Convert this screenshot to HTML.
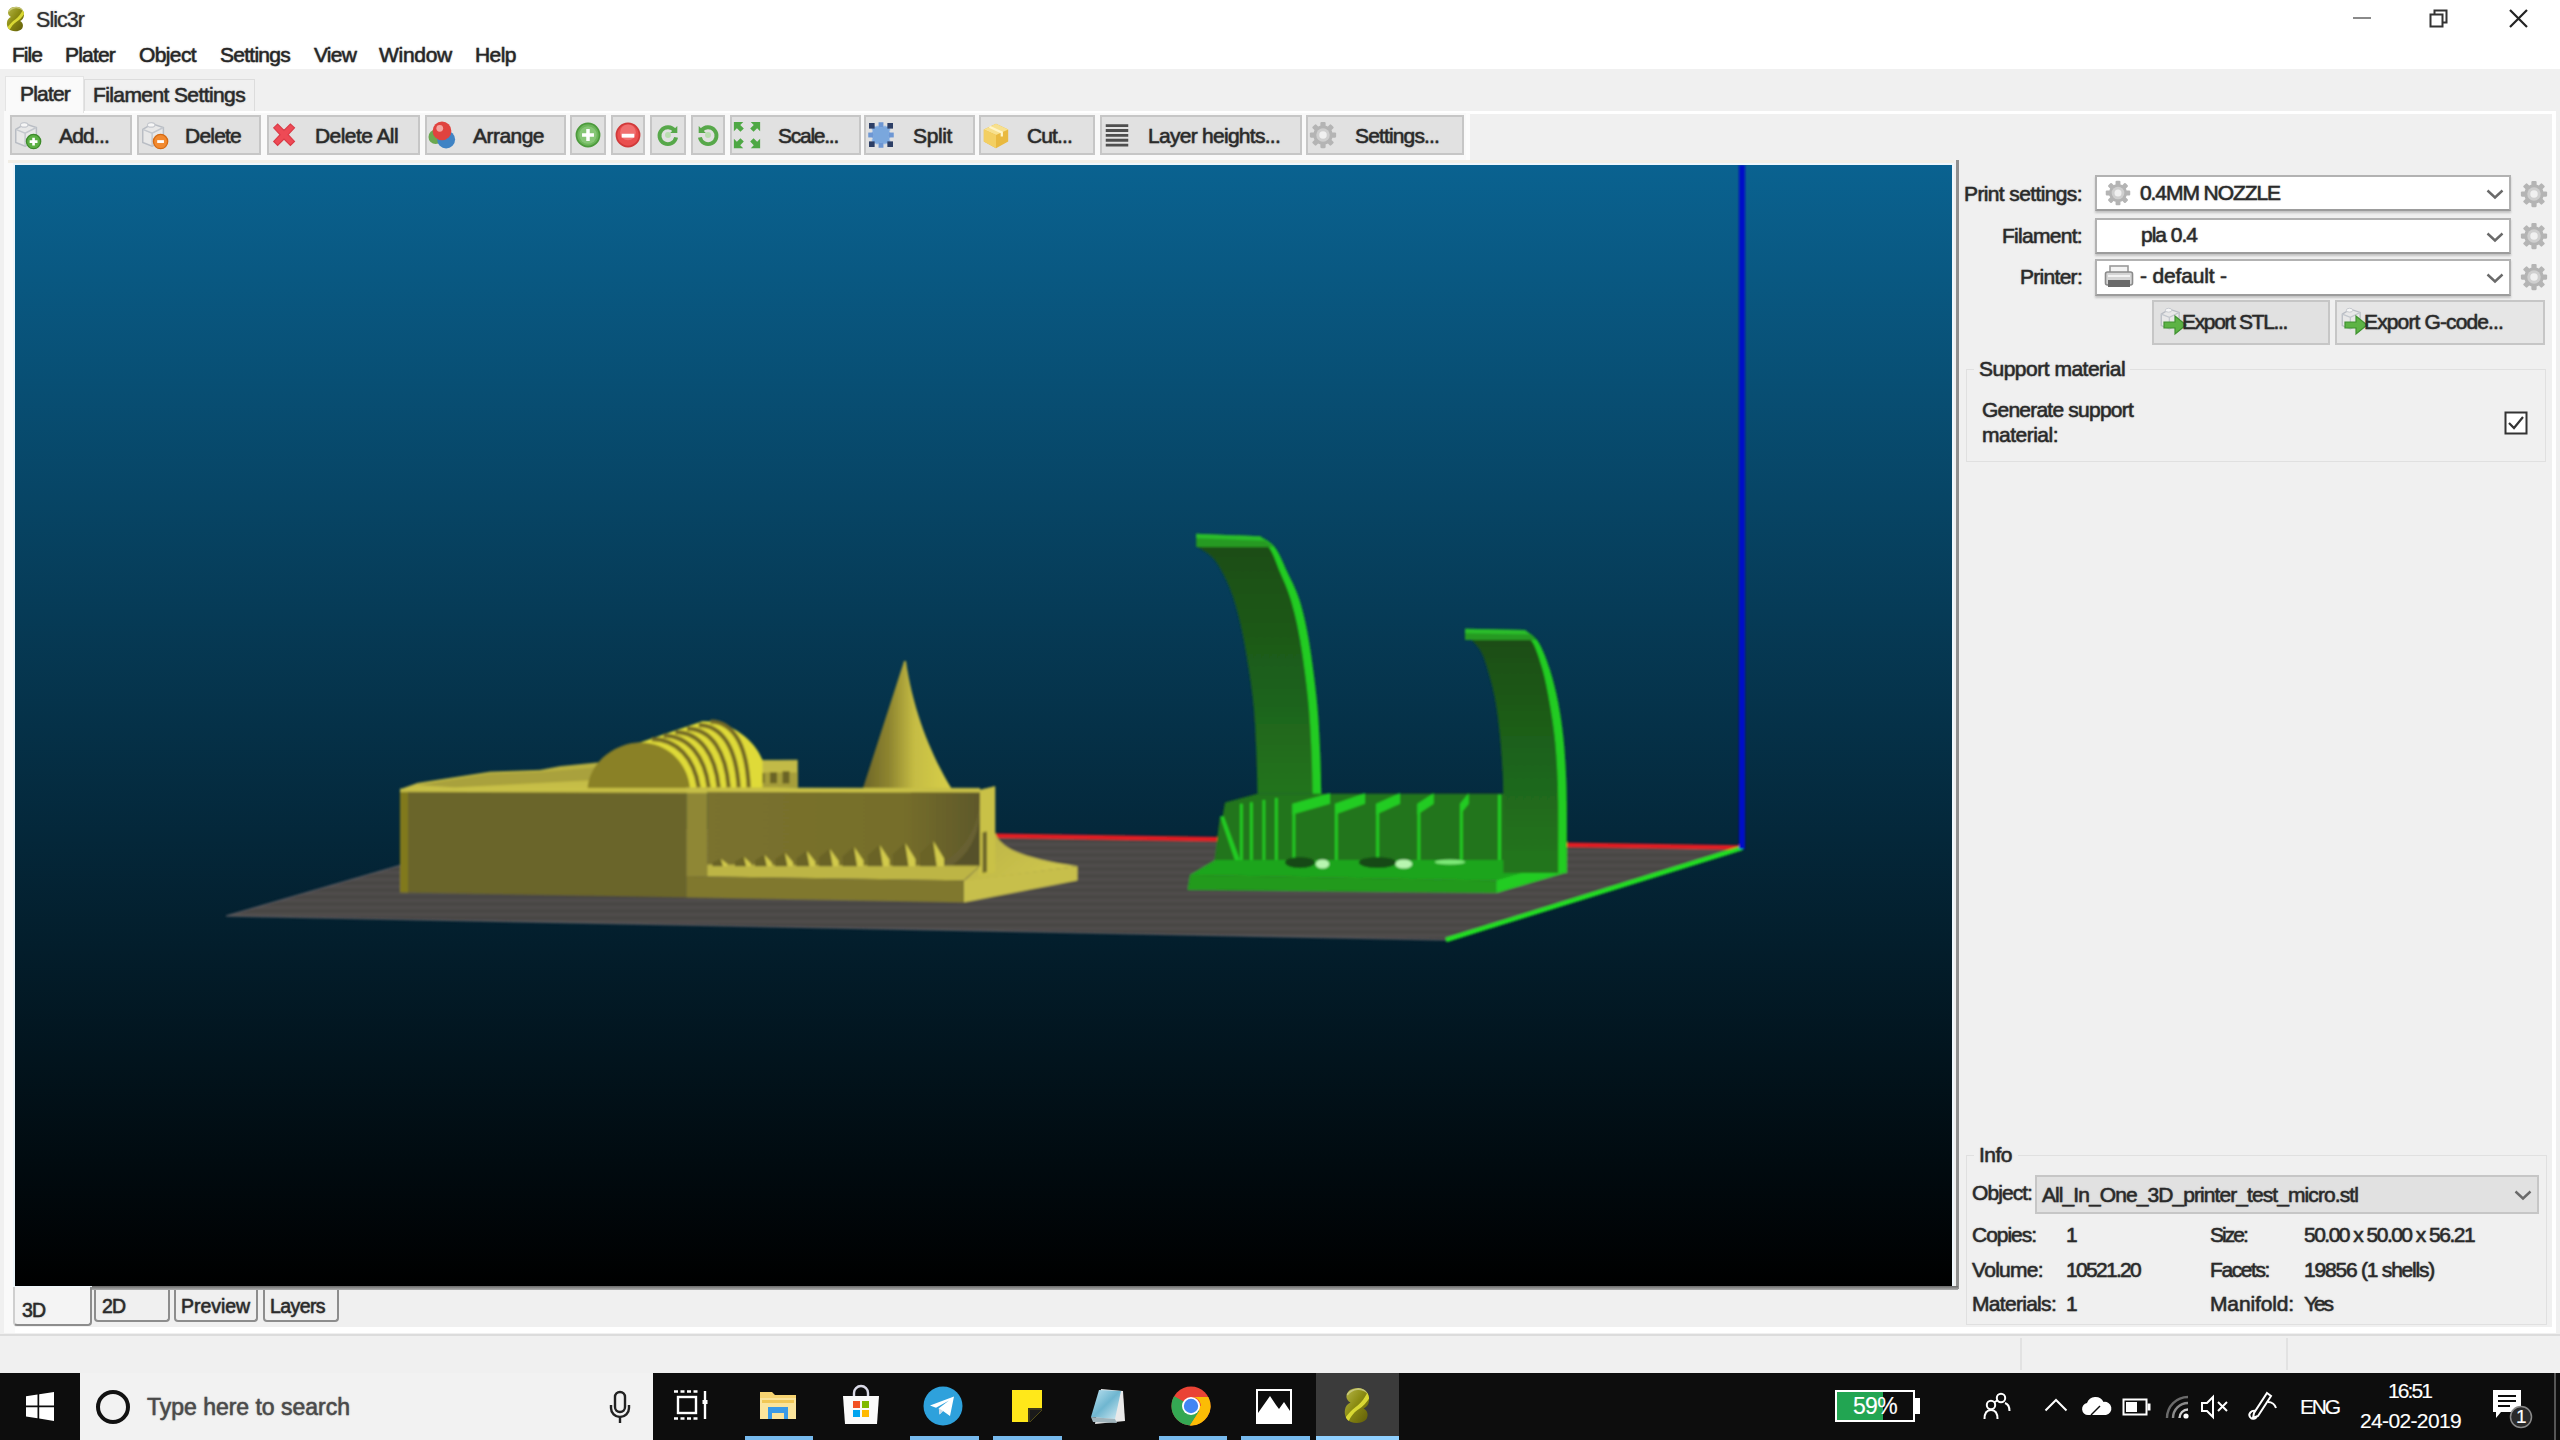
<!DOCTYPE html>
<html><head><meta charset="utf-8"><title>Slic3r</title>
<style>
html,body{margin:0;padding:0}
body{width:2560px;height:1440px;position:relative;overflow:hidden;background:#f0f0f0;font-family:"Liberation Sans",sans-serif}
.t{position:absolute;white-space:nowrap;line-height:30px;height:30px;-webkit-text-stroke:.45px currentColor;text-shadow:0 0 1.6px rgba(60,60,60,.55)}
.a{position:absolute}
.btn{position:absolute;background:#e1e1e1;border:2px solid #c6c6c6;box-sizing:border-box}
.combo{position:absolute;background:#fff;border:2px solid #b2b2b2;border-bottom:2.5px solid #9c9c9c;box-shadow:0 2px 2px #c4c4c4;box-sizing:border-box}
svg{position:absolute;overflow:visible}
</style></head><body>
<div class="a" style="left:0;top:0;width:2560px;height:69px;background:#fff"></div>
<svg style="left:6px;top:6px" width="19" height="26" viewBox="0 0 26 37">
<defs><linearGradient id="lga" x1="0" y1="0" x2="1" y2="1"><stop offset="0" stop-color="#b8b84a"/><stop offset=".45" stop-color="#8c8c14"/><stop offset="1" stop-color="#5e5a08"/></linearGradient>
<clipPath id="lca"><path d="M14 1C22 1 26 8 25 14C24.500 18 22.500 20 19.500 21.500C23 23 25 27.500 22.500 32C19.500 36 12 37 7 35C2 33 0 28 1 22.500C1.500 19 3.500 17 6.500 15.500C2.500 13.500 1 9 4 5C6 2 10 1 14 1Z"/></clipPath></defs>
<path d="M14 1C22 1 26 8 25 14C24.500 18 22.500 20 19.500 21.500C23 23 25 27.500 22.500 32C19.500 36 12 37 7 35C2 33 0 28 1 22.500C1.500 19 3.500 17 6.500 15.500C2.500 13.500 1 9 4 5C6 2 10 1 14 1Z" fill="url(#lga)"/>
<g clip-path="url(#lca)"><path d="M-2 36C4 26 9 22 13 19C17 16 22 10 26 0L30 4C24 14 20 19 15 22C10 25 6 30 2 40Z" fill="#d9d834"/><path d="M3 8C8 1 18 0 24 6" fill="none" stroke="#cfd08a" stroke-width="2" opacity=".8"/></g></svg>
<span class="t" style="left:36.0px;top:5.0px;font-size:21.5px;letter-spacing:-0.96px;color:#303030;-webkit-text-stroke:.15px currentColor">Slic3r</span>
<div class="a" style="left:2353px;top:17px;width:18px;height:2px;background:#8a8a8a"></div>
<svg style="left:2429px;top:9px" width="20" height="20" viewBox="0 0 20 20"><path d="M1.5 5.5h12v12h-12z M5.5 5.5v-4h12v12h-4" fill="none" stroke="#333" stroke-width="2"/></svg>
<svg style="left:2509px;top:9px" width="19" height="19" viewBox="0 0 19 19"><path d="M1 1L18 18M18 1L1 18" stroke="#222" stroke-width="2.2"/></svg>
<span class="t" style="left:12.0px;top:40.0px;font-size:21px;letter-spacing:-0.96px;color:#262626;">File</span>
<span class="t" style="left:65.0px;top:40.0px;font-size:21px;letter-spacing:-0.81px;color:#262626;">Plater</span>
<span class="t" style="left:139.0px;top:40.0px;font-size:21px;letter-spacing:-0.62px;color:#262626;">Object</span>
<span class="t" style="left:220.0px;top:40.0px;font-size:21px;letter-spacing:-0.74px;color:#262626;">Settings</span>
<span class="t" style="left:314.0px;top:40.0px;font-size:21px;letter-spacing:-0.78px;color:#262626;">View</span>
<span class="t" style="left:379.0px;top:40.0px;font-size:21px;letter-spacing:-0.28px;color:#262626;">Window</span>
<span class="t" style="left:475.0px;top:40.0px;font-size:21px;letter-spacing:-0.55px;color:#262626;">Help</span>
<div class="a" style="left:4px;top:111px;width:2552px;height:1223px;background:#fff"></div>
<div class="a" style="left:8px;top:113.5px;width:2544px;height:1213.5px;background:#f0f0f0"></div>
<div class="a" style="left:5px;top:76px;width:79px;height:37px;background:#fafafa;border:1px solid #e4e4e4;border-bottom:none;box-sizing:border-box"></div>
<div class="a" style="left:84px;top:79px;width:171px;height:32px;background:#f0f0f0;border:1px solid #dcdcdc;border-bottom:none;box-sizing:border-box"></div>
<span class="t" style="left:20.0px;top:79.0px;font-size:21px;letter-spacing:-0.81px;color:#2a2a2a;">Plater</span>
<span class="t" style="left:93.0px;top:80.0px;font-size:21px;letter-spacing:-0.60px;color:#2a2a2a;">Filament Settings</span>
<div class="a" style="left:8px;top:113px;width:1459px;height:47px;background:#f9f9f9"></div>
<div class="a" style="left:1466px;top:113px;width:4px;height:47px;background:#fcfcfc"></div>
<div class="btn" style="left:10px;top:115px;width:122px;height:40px"></div>
<svg style="left:12px;top:120px" width="30" height="30" viewBox="0 0 16 16"><path d="M2 5l5-3 6 2v7l-6 3-5-2z" fill="#e8e8e8" stroke="#b9bdc4" stroke-width=".8"/><path d="M2 5l5 2 6-3M7 7v7" fill="none" stroke="#c3c7cd" stroke-width=".8"/><ellipse cx="6.5" cy="2.6" rx="2" ry="1.2" fill="#f6f6f6" stroke="#c5c8ce" stroke-width=".6"/><circle cx="11.5" cy="11.5" r="3.8" fill="#5cb044" stroke="#3c8a2a" stroke-width=".7"/><path d="M11.5 9.4v4.2M9.4 11.5h4.2" stroke="#fff" stroke-width="1.4"/></svg>
<span class="t" style="left:59.0px;top:121.0px;font-size:21px;letter-spacing:-0.81px;color:#2a2a2a;">Add...</span>
<div class="btn" style="left:137px;top:115px;width:124px;height:40px"></div>
<svg style="left:139px;top:120px" width="30" height="30" viewBox="0 0 16 16"><path d="M2 5l5-3 6 2v7l-6 3-5-2z" fill="#e8e8e8" stroke="#b9bdc4" stroke-width=".8"/><path d="M2 5l5 2 6-3M7 7v7" fill="none" stroke="#c3c7cd" stroke-width=".8"/><ellipse cx="6.5" cy="2.6" rx="2" ry="1.2" fill="#f6f6f6" stroke="#c5c8ce" stroke-width=".6"/><circle cx="11.5" cy="11.5" r="3.8" fill="#f28a30" stroke="#d56a12" stroke-width=".7"/><path d="M9.7 11.5h3.6" stroke="#fff" stroke-width="1.5"/></svg>
<span class="t" style="left:185.0px;top:121.0px;font-size:21px;letter-spacing:-0.78px;color:#2a2a2a;">Delete</span>
<div class="btn" style="left:267px;top:115px;width:153px;height:40px"></div>
<svg style="left:269px;top:120px" width="30" height="30" viewBox="0 0 16 16"><path d="M2.5 4.2L4.6 2.2 8 5.6 11.4 2.2 13.6 4.2 10.2 7.8 13.6 11.4 11.4 13.6 8 10.2 4.6 13.6 2.5 11.4 5.9 7.8Z" fill="#ee4a55" stroke="#d93a46" stroke-width=".6"/></svg>
<span class="t" style="left:315.0px;top:121.0px;font-size:21px;letter-spacing:-0.57px;color:#2a2a2a;">Delete All</span>
<div class="btn" style="left:425px;top:115px;width:141px;height:40px"></div>
<svg style="left:427px;top:120px" width="30" height="30" viewBox="0 0 16 16"><circle cx="4.600" cy="9" r="3.800" fill="#6aa84f"/><circle cx="10.200" cy="10.400" r="4.800" fill="#3f83c4"/><circle cx="8" cy="5.800" r="5" fill="#e0433f"/><circle cx="6.800" cy="4.400" r="1.800" fill="#f3a5a1"/></svg>
<span class="t" style="left:473.0px;top:121.0px;font-size:21px;letter-spacing:-0.53px;color:#2a2a2a;">Arrange</span>
<div class="btn" style="left:570px;top:115px;width:36px;height:40px"></div>
<svg style="left:574.0px;top:121.0px" width="28" height="28" viewBox="0 0 16 16"><circle cx="8" cy="8" r="6.6" fill="#6cb65a" stroke="#4c9a3c" stroke-width="1"/><circle cx="8" cy="8" r="5" fill="#86c676"/><path d="M8 4.6v6.8M4.6 8h6.8" stroke="#fff" stroke-width="2"/></svg>
<div class="btn" style="left:611px;top:115px;width:34px;height:40px"></div>
<svg style="left:614.0px;top:121.0px" width="28" height="28" viewBox="0 0 16 16"><circle cx="8" cy="8" r="6.6" fill="#ea4f4f" stroke="#d03a3a" stroke-width="1"/><circle cx="8" cy="6.5" r="4.5" fill="#f07070"/><path d="M4.4 8.4h7.2" stroke="#fff" stroke-width="2.2"/></svg>
<div class="btn" style="left:650px;top:115px;width:36px;height:40px"></div>
<svg style="left:656.0px;top:123.0px" width="24" height="24" viewBox="0 0 16 16"><path d="M12.5 5.2A5.6 5.6 0 1 0 13.4 9.6" fill="none" stroke="#57a84a" stroke-width="2.6"/><path d="M9.4 6.6h4.8V2z" fill="#57a84a"/><circle cx="8" cy="8" r="2" fill="#b9deb0"/></svg>
<div class="btn" style="left:691px;top:115px;width:34px;height:40px"></div>
<svg style="left:696.0px;top:123.0px" width="24" height="24" viewBox="0 0 16 16"><path d="M3.5 5.2A5.6 5.6 0 1 1 2.6 9.6" fill="none" stroke="#57a84a" stroke-width="2.6"/><path d="M6.6 6.6H1.8V2z" fill="#57a84a"/><circle cx="8" cy="8" r="2" fill="#b9deb0"/></svg>
<div class="btn" style="left:730px;top:115px;width:131px;height:40px"></div>
<svg style="left:732px;top:120px" width="30" height="30" viewBox="0 0 16 16"><g fill="#4ea844"><path d="M1 1h5L4.4 2.6 6.3 4.5 4.5 6.3 2.6 4.4 1 6z"/><path d="M15 1v5l-1.6-1.6-1.9 1.9-1.8-1.8 1.9-1.9L10 1z"/><path d="M1 15v-5l1.6 1.6 1.9-1.9 1.8 1.8-1.9 1.9L6 15z"/><path d="M15 15h-5l1.6-1.6-1.9-1.9 1.8-1.8 1.9 1.9L15 10z"/></g></svg>
<span class="t" style="left:778.0px;top:121.0px;font-size:21px;letter-spacing:-1.25px;color:#2a2a2a;">Scale...</span>
<div class="btn" style="left:864px;top:115px;width:111px;height:40px"></div>
<svg style="left:866px;top:120px" width="30" height="30" viewBox="0 0 16 16"><rect x="3.5" y="3.5" width="9" height="9" fill="#7aa7dd" stroke="#8fb6e6" stroke-width=".8" stroke-dasharray="1.2 .8"/><g fill="#2d3f66"><rect x="1.6" y="1.6" width="3" height="3"/><rect x="11.4" y="1.6" width="3" height="3"/><rect x="1.6" y="11.4" width="3" height="3"/><rect x="11.4" y="11.4" width="3" height="3"/></g><g fill="#6d97d4"><rect x="6.7" y="1.2" width="2.6" height="2.6"/><rect x="6.7" y="12.2" width="2.6" height="2.6"/><rect x="1.2" y="6.7" width="2.6" height="2.6"/><rect x="12.2" y="6.7" width="2.6" height="2.6"/></g></svg>
<span class="t" style="left:913.0px;top:121.0px;font-size:21px;letter-spacing:-0.37px;color:#2a2a2a;">Split</span>
<div class="btn" style="left:979px;top:115px;width:116px;height:40px"></div>
<svg style="left:981px;top:120px" width="30" height="30" viewBox="0 0 16 16"><path d="M1.5 5L8 2l6.5 3v6.5L8 15l-6.5-3.5z" fill="#e9b93f"/><path d="M1.5 5L8 8l6.5-3L8 2z" fill="#f7e08e"/><path d="M1.5 5L8 8v7l-6.5-3.5z" fill="#f3cf62"/><path d="M4.5 3.6l6.6 3v2.2" stroke="#fff4c6" stroke-width="1.2" fill="none"/></svg>
<span class="t" style="left:1027.0px;top:121.0px;font-size:21px;letter-spacing:-0.86px;color:#2a2a2a;">Cut...</span>
<div class="btn" style="left:1100px;top:115px;width:202px;height:40px"></div>
<svg style="left:1102px;top:120px" width="30" height="30" viewBox="0 0 16 16"><g stroke="#4e4e4e" stroke-width="1.5"><path d="M2 3h12M2 5.6h12M2 8.2h12M2 10.8h12M2 13.4h12"/></g></svg>
<span class="t" style="left:1148.0px;top:121.0px;font-size:21px;letter-spacing:-0.72px;color:#2a2a2a;">Layer heights...</span>
<div class="btn" style="left:1306px;top:115px;width:158px;height:40px"></div>
<svg style="left:1308px;top:120px" width="30" height="30" viewBox="0 0 16 16"><g fill="#b4b4b4"><circle cx="8" cy="8" r="5.2"/><g><rect x="6.6" y="1" width="2.8" height="14" rx=".6"/><rect x="6.6" y="1" width="2.8" height="14" rx=".6" transform="rotate(45 8 8)"/><rect x="6.6" y="1" width="2.8" height="14" rx=".6" transform="rotate(90 8 8)"/><rect x="6.6" y="1" width="2.8" height="14" rx=".6" transform="rotate(135 8 8)"/></g></g><circle cx="8" cy="8" r="3.6" fill="#cfcfcf"/><circle cx="8" cy="8" r="2" fill="#f0f0f0"/></svg>
<span class="t" style="left:1355.0px;top:121.0px;font-size:21px;letter-spacing:-0.85px;color:#2a2a2a;">Settings...</span>
<div class="a" style="left:4px;top:111px;width:4px;height:1216px;background:#fff"></div>
<div class="a" style="left:4px;top:111px;width:5px;height:52px;background:#fafafa"></div>
<div class="a" style="left:4px;top:160px;width:11px;height:1173px;background:#fafafa"></div>
<div class="a" style="left:8px;top:160px;width:1946px;height:3px;background:#f1eee6"></div>
<div class="a" style="left:13px;top:163px;width:1941px;height:1125px;background:#eef6fb"></div>
<div class="a" style="left:1955.5px;top:160px;width:3px;height:1129px;background:#8f8f8f"></div>
<div class="a" id="cv" style="left:15px;top:165px;width:1937px;height:1121px;background:linear-gradient(#0a6290,#000)"></div>
<svg style="left:0;top:0" width="2560" height="1440" viewBox="0 0 2560 1440">
<defs>
<pattern id="bedp" width="8" height="7" patternUnits="userSpaceOnUse"><rect width="8" height="7" fill="#4c4a48"/><rect y="0" width="8" height="2" fill="#464442"/><rect y="4" width="8" height="1" fill="#545150"/></pattern>
<linearGradient id="cone" x1="0" y1="0" x2="1" y2="0"><stop offset="0" stop-color="#6c6428"/><stop offset=".3" stop-color="#8f8630"/><stop offset=".58" stop-color="#c6bd44"/><stop offset="1" stop-color="#d8d048"/></linearGradient>
<linearGradient id="ytop" x1="0" y1="0" x2="0" y2="1"><stop offset="0" stop-color="#b5ad40"/><stop offset="1" stop-color="#cac248"/></linearGradient>
<linearGradient id="yrec" x1="0" y1="0" x2="1" y2="0"><stop offset="0" stop-color="#7a722e"/><stop offset=".72" stop-color="#766e2b"/><stop offset="1" stop-color="#5e582a"/></linearGradient>
<linearGradient id="flare" x1="0" y1="0" x2="1" y2="1"><stop offset="0" stop-color="#b2aa42"/><stop offset="1" stop-color="#d2ca50"/></linearGradient>
<filter id="softb" x="0" y="0" width="2560" height="1440" filterUnits="userSpaceOnUse"><feGaussianBlur stdDeviation=".8"/></filter>
<clipPath id="cvclip"><rect x="15" y="165" width="1937" height="1121"/></clipPath>
</defs>
<g clip-path="url(#cvclip)"><g filter="url(#softb)">
<polygon points="226,916 532,827 1742,848 1446,940" fill="url(#bedp)"/>
<polygon points="226,916 532,827 1742,848 1446,940" fill="none" stroke="#6a686c" stroke-width="1.5" opacity=".6"/>
<line x1="1742" y1="847.5" x2="985" y2="835.5" stroke="#e41c22" stroke-width="4.5"/>
<line x1="1742" y1="848" x2="1446" y2="940" stroke="#20e020" stroke-width="4.5"/>
<line x1="1742" y1="165" x2="1742" y2="849" stroke="#0410c8" stroke-width="6"/>
<g transform="translate(380,640) scale(.25)">
<path d="M2400 600L2460 585 2460 770C2480 830 2560 870 2790 905L2335 965 2400 905Z" fill="url(#flare)"/>
<polygon points="2335,962 2335,1050 2790,962 2790,905" fill="#c7bf4b"/>
<path d="M2096 85L1930 598L2290 600C2215 480 2135 300 2104 85Z" fill="url(#cone)"/>
<polygon points="80,597 150,572 440,527 640,520 720,505 870,490 1670,480 1670,590 1310,603 80,603" fill="url(#ytop)"/>
<polygon points="150,580 440,535 640,528 860,510 860,560 300,590" fill="#a9a13c"/>
<rect x="1330" y="480" width="340" height="110" fill="#c2ba46"/>
<rect x="1330" y="530" width="340" height="60" fill="#a69e3a"/>
<rect x="1360" y="545" width="28" height="24" fill="#6a6428"/>
<rect x="1410" y="541" width="28" height="29" fill="#6a6428"/>
<rect x="1460" y="537" width="28" height="34" fill="#6a6428"/>
<rect x="1510" y="533" width="28" height="39" fill="#6a6428"/>
<rect x="1560" y="529" width="28" height="44" fill="#6a6428"/>
<rect x="1610" y="525" width="28" height="49" fill="#6a6428"/>
<path d="M830 592C840 500 950 430 1040 410L1290 325C1400 320 1500 400 1530 480L1530 592Z" fill="#dfda38"/>
<path d="M1087 396C1187 396 1257.3 473.0 1274.95 590" fill="none" stroke="#746a28" stroke-width="17"/>
<path d="M1134 382C1234 382 1299.6 466.0 1314.9 590" fill="none" stroke="#746a28" stroke-width="17"/>
<path d="M1181 368C1281 368 1341.9 459.0 1354.85 590" fill="none" stroke="#746a28" stroke-width="17"/>
<path d="M1228 354C1328 354 1384.2 452.0 1394.8 590" fill="none" stroke="#746a28" stroke-width="17"/>
<path d="M1275 340C1375 340 1426.5 445.0 1434.75 590" fill="none" stroke="#746a28" stroke-width="17"/>
<path d="M1322 326C1422 326 1468.8 438.0 1474.7 590" fill="none" stroke="#746a28" stroke-width="17"/>
<path d="M830 592C840 480 950 410 1040 410C1150 410 1230 490 1240 592Z" fill="#8a8128"/>
<polygon points="2396,600 2461,585 2461,930 2396,945" fill="#c9c146"/>
<polygon points="2410,770 2428,766 2428,928 2410,932" fill="#6e672c"/>
<polygon points="1310,603 2400,603 2400,905 1310,900" fill="url(#yrec)"/>
<path d="M2400 640C2390 760 2330 850 2230 900L2400 905Z" fill="#676030"/>
<path d="M2400 700C2392 790 2350 860 2290 900L2400 905Z" fill="#56512a"/>
<polygon points="1225,945 2335,962 2400,903 1310,898" fill="#bdb545"/>
<path d="M1330 905L1330 890.0L1363.0 875L1372.0 905Z" fill="#6a6428"/>
<path d="M1363.0 875L1390 896.0L1390 905L1372.0 905Z" fill="#d2ca4c"/>
<path d="M1420 905L1420 886.0L1455.2 867L1464.8 905Z" fill="#6a6428"/>
<path d="M1455.2 867L1484 893.6L1484 905L1464.8 905Z" fill="#d2ca4c"/>
<path d="M1500 905L1500 882.0L1537.4 859L1547.6 905Z" fill="#6a6428"/>
<path d="M1537.4 859L1568 891.2L1568 905L1547.6 905Z" fill="#d2ca4c"/>
<path d="M1580 905L1580 878.0L1619.6 851L1630.4 905Z" fill="#6a6428"/>
<path d="M1619.6 851L1652 888.8L1652 905L1630.4 905Z" fill="#d2ca4c"/>
<path d="M1665 905L1665 874.0L1706.8 843L1718.2 905Z" fill="#6a6428"/>
<path d="M1706.8 843L1741 886.4L1741 905L1718.2 905Z" fill="#d2ca4c"/>
<path d="M1755 905L1755 870.0L1799.0 835L1811.0 905Z" fill="#6a6428"/>
<path d="M1799.0 835L1835 884.0L1835 905L1811.0 905Z" fill="#d2ca4c"/>
<path d="M1850 905L1850 866.0L1896.2 827L1908.8 905Z" fill="#6a6428"/>
<path d="M1896.2 827L1934 881.6L1934 905L1908.8 905Z" fill="#d2ca4c"/>
<path d="M1950 905L1950 862.0L1998.4 819L2011.6 905Z" fill="#6a6428"/>
<path d="M1998.4 819L2038 879.2L2038 905L2011.6 905Z" fill="#d2ca4c"/>
<path d="M2050 905L2050 858.0L2100.6 811L2114.4 905Z" fill="#6a6428"/>
<path d="M2100.6 811L2142 876.8L2142 905L2114.4 905Z" fill="#d2ca4c"/>
<path d="M2160 905L2160 854.0L2212.8 803L2227.2 905Z" fill="#6a6428"/>
<path d="M2212.8 803L2256 874.4L2256 905L2227.2 905Z" fill="#d2ca4c"/>
<polygon points="1310,590 2400,592 2400,610 1310,608" fill="#c8c046"/>
<polygon points="1225,603 1310,603 1310,945 1225,945" fill="#8f8736"/>
<polygon points="1225,590 1310,590 1310,606 1225,606" fill="#c4bc48"/>
<polygon points="1225,945 2335,962 2335,1050 1225,1030" fill="#80782f"/>
<polygon points="80,600 1225,604 1225,1030 80,1010" fill="#6a6529"/>
<polygon points="80,600 112,600 112,1011 80,1010" fill="#81791f"/>
<polygon points="80,595 1310,600 1310,612 80,608" fill="#cbc349" opacity=".9"/>
</g>
<g transform="translate(1140,500) scale(.25)">
<polygon points="340,1210 470,1175 1462,1175 1462,1440 300,1440" fill="#24751b"/>
<rect x="400" y="1215" width="11" height="225" fill="#22cc22"/>
<rect x="440" y="1209" width="11" height="231" fill="#22cc22"/>
<rect x="490" y="1200" width="11" height="240" fill="#22cc22"/>
<rect x="540" y="1192" width="11" height="248" fill="#22cc22"/>
<polygon points="610,1215 760,1172 760,1215 610,1258" fill="#22cc22"/>
<rect x="610" y="1215" width="11" height="230" fill="#22cc22"/>
<polygon points="780,1215 900,1172 900,1215 780,1258" fill="#22cc22"/>
<rect x="780" y="1215" width="11" height="230" fill="#22cc22"/>
<polygon points="945,1215 1040,1172 1040,1215 945,1258" fill="#22cc22"/>
<rect x="945" y="1215" width="11" height="230" fill="#22cc22"/>
<polygon points="1110,1215 1175,1172 1175,1215 1110,1258" fill="#22cc22"/>
<rect x="1110" y="1215" width="11" height="230" fill="#22cc22"/>
<polygon points="1280,1215 1315,1172 1315,1215 1280,1258" fill="#22cc22"/>
<rect x="1280" y="1215" width="11" height="230" fill="#22cc22"/>
<rect x="1432" y="1178" width="12" height="262" fill="#22cc22"/>
<polygon points="320,1265 410,1500 290,1500" fill="#24751b"/>
<polygon points="320,1265 335,1265 420,1495 400,1500" fill="#22cc22"/>
<polygon points="300,1440 1705,1440 1705,1490 1425,1522 200,1500" fill="#1fa51f"/>
<ellipse cx="640" cy="1450" rx="60" ry="22" fill="#124a12"/>
<ellipse cx="730" cy="1456" rx="27.0" ry="18" fill="#b8f5b0"/>
<ellipse cx="950" cy="1450" rx="75" ry="22" fill="#124a12"/>
<ellipse cx="1055" cy="1456" rx="33.75" ry="18" fill="#b8f5b0"/>
<ellipse cx="1240" cy="1448" rx="60" ry="10" fill="#7eea78"/>
<polygon points="200,1500 1425,1522 1425,1572 190,1560" fill="#219a1d"/>
<polygon points="1425,1522 1425,1572 1705,1490 1705,1440" fill="#22cc22"/>
<defs><linearGradient id="ga1" gradientUnits="userSpaceOnUse" x1="0" y1="180" x2="0" y2="1170"><stop offset="0" stop-color="#1b4d18"/><stop offset=".5" stop-color="#1e5e1a"/><stop offset="1" stop-color="#22741b"/></linearGradient><linearGradient id="ga2" gradientUnits="userSpaceOnUse" x1="0" y1="555" x2="0" y2="1440"><stop offset="0" stop-color="#1b4d18"/><stop offset=".5" stop-color="#1e621a"/><stop offset="1" stop-color="#22741b"/></linearGradient></defs>
<path d="M225 185C235.8 192.5 271.7 210.8 290.0 230.0C308.3 249.2 320.7 271.7 335.0 300.0C349.3 328.3 362.7 356.7 376.0 400.0C389.3 443.3 402.3 493.3 415.0 560.0C427.7 626.7 443.7 726.7 452.0 800.0C460.3 873.3 462.0 937.5 465.0 1000.0C468.0 1062.5 469.2 1145.8 470.0 1175.0L725 1175C724.2 1145.8 723.0 1062.5 720.0 1000.0C717.0 937.5 714.5 873.3 707.0 800.0C699.5 726.7 686.5 626.7 675.0 560.0C663.5 493.3 652.2 445.0 638.0 400.0C623.8 355.0 606.3 325.0 590.0 290.0C573.7 255.0 558.3 214.2 540.0 190.0C521.7 165.8 490.0 152.5 480.0 145.0Z" fill="url(#ga1)"/><path d="M480 145C490.0 152.5 521.7 165.8 540.0 190.0C558.3 214.2 573.7 255.0 590.0 290.0C606.3 325.0 623.8 355.0 638.0 400.0C652.2 445.0 663.5 493.3 675.0 560.0C686.5 626.7 699.5 726.7 707.0 800.0C714.5 873.3 717.0 937.5 720.0 1000.0C723.0 1062.5 724.2 1145.8 725.0 1175.0L691.0 1175.0C690.2 1145.8 689.0 1062.5 686.0 1000.0C683.0 937.5 680.5 873.3 673.0 800.0C665.5 726.7 652.5 626.7 641.0 560.0C629.5 493.3 617.3 445.0 604.0 400.0C590.7 355.0 575.7 325.0 561.1 290.0C546.5 255.0 532.8 211.8 516.2 190.0C499.6 168.2 470.5 164.2 461.3 159.0Z" fill="#22cc22"/><polygon points="225,135 480,145 535,188 225,188" fill="#259a22"/><polygon points="225,135 480,145 502,163 225,153" fill="#2bbd2b"/>
<path d="M1327 560C1333.7 568.7 1354.8 586.7 1367.0 612.0C1379.2 637.3 1390.7 678.7 1400.0 712.0C1409.3 745.3 1416.3 772.8 1423.0 812.0C1429.7 851.2 1435.5 902.3 1440.0 947.0C1444.5 991.7 1447.8 1042.5 1450.0 1080.0C1452.2 1117.5 1452.5 1112.0 1453.0 1172.0C1453.5 1232.0 1453.0 1395.3 1453.0 1440.0L1707 1440C1707.0 1402.0 1707.7 1272.0 1707.0 1212.0C1706.3 1152.0 1705.3 1124.2 1703.0 1080.0C1700.7 1035.8 1698.0 991.7 1693.0 947.0C1688.0 902.3 1681.8 856.5 1673.0 812.0C1664.2 767.5 1653.3 720.8 1640.0 680.0C1626.7 639.2 1609.7 593.3 1593.0 567.0C1576.3 540.7 1548.8 529.5 1540.0 522.0Z" fill="url(#ga2)"/><path d="M1540 522C1548.8 529.5 1576.3 540.7 1593.0 567.0C1609.7 593.3 1626.7 639.2 1640.0 680.0C1653.3 720.8 1664.2 767.5 1673.0 812.0C1681.8 856.5 1688.0 902.3 1693.0 947.0C1698.0 991.7 1700.7 1035.8 1703.0 1080.0C1705.3 1124.2 1706.3 1152.0 1707.0 1212.0C1707.7 1272.0 1707.0 1402.0 1707.0 1440.0L1673.0 1440.0C1673.0 1402.0 1673.7 1272.0 1673.0 1212.0C1672.3 1152.0 1671.3 1124.2 1669.0 1080.0C1666.7 1035.8 1664.0 991.7 1659.0 947.0C1654.0 902.3 1647.0 856.5 1639.0 812.0C1631.0 767.5 1622.7 720.8 1611.1 680.0C1599.5 639.2 1584.2 591.0 1569.2 567.0C1554.2 543.0 1529.3 541.2 1521.3 536.0Z" fill="#22cc22"/><polygon points="1300,515 1540,520 1588,560 1300,560" fill="#259a22"/><polygon points="1300,515 1540,520 1562,538 1300,533" fill="#2bbd2b"/>
<rect x="1453" y="1400" width="254" height="92" fill="#24751b"/><rect x="1673" y="1400" width="34" height="92" fill="#22cc22"/>
</g>
</g></g></svg>
<span class="t" style="left:1964.0px;top:179.0px;font-size:21px;letter-spacing:-0.62px;color:#2a2a2a;">Print settings:</span>
<span class="t" style="left:2002.0px;top:221.0px;font-size:21px;letter-spacing:-0.71px;color:#2a2a2a;">Filament:</span>
<span class="t" style="left:2020.0px;top:262.0px;font-size:21px;letter-spacing:-0.71px;color:#2a2a2a;">Printer:</span>
<div class="combo" style="left:2095px;top:175px;width:416px;height:36px"></div>
<svg style="left:2486px;top:189px" width="18" height="10" viewBox="0 0 18 10"><path d="M1.5 1.5L9 8.5 16.5 1.5" fill="none" stroke="#6a6a6a" stroke-width="2.4"/></svg>
<div class="combo" style="left:2095px;top:218px;width:416px;height:36px"></div>
<svg style="left:2486px;top:232px" width="18" height="10" viewBox="0 0 18 10"><path d="M1.5 1.5L9 8.5 16.5 1.5" fill="none" stroke="#6a6a6a" stroke-width="2.4"/></svg>
<div class="combo" style="left:2095px;top:259px;width:416px;height:37px"></div>
<svg style="left:2486px;top:273px" width="18" height="10" viewBox="0 0 18 10"><path d="M1.5 1.5L9 8.5 16.5 1.5" fill="none" stroke="#6a6a6a" stroke-width="2.4"/></svg>
<svg style="left:2104px;top:179px" width="28" height="28" viewBox="0 0 16 16"><g fill="#b4b4b4"><circle cx="8" cy="8" r="5.2"/><g><rect x="6.6" y="1" width="2.8" height="14" rx=".6"/><rect x="6.6" y="1" width="2.8" height="14" rx=".6" transform="rotate(45 8 8)"/><rect x="6.6" y="1" width="2.8" height="14" rx=".6" transform="rotate(90 8 8)"/><rect x="6.6" y="1" width="2.8" height="14" rx=".6" transform="rotate(135 8 8)"/></g></g><circle cx="8" cy="8" r="3.6" fill="#cfcfcf"/><circle cx="8" cy="8" r="2" fill="#f0f0f0"/></svg>
<span class="t" style="left:2140.0px;top:178.0px;font-size:21px;letter-spacing:-1.07px;color:#2a2a2a;">0.4MM NOZZLE</span>
<span class="t" style="left:2141.0px;top:220.0px;font-size:21px;letter-spacing:-1.01px;color:#2a2a2a;">pla 0.4</span>
<svg style="left:2104px;top:264px" width="30" height="26" viewBox="0 0 30 26"><rect x="6" y="2" width="18" height="8" fill="#f4f4f4" stroke="#9a9a9a" stroke-width="1.6"/><rect x="1.5" y="8" width="27" height="13" rx="2" fill="#d5d5d5" stroke="#8a8a8a" stroke-width="1.6"/><rect x="4" y="16" width="22" height="7" fill="#6a6a6a"/><rect x="4" y="11" width="22" height="2" fill="#f3f3f3"/></svg>
<span class="t" style="left:2140.0px;top:261.0px;font-size:21px;letter-spacing:-0.16px;color:#2a2a2a;">- default -</span>
<svg style="left:2519px;top:179px" width="30" height="30" viewBox="0 0 16 16"><g fill="#b4b4b4"><circle cx="8" cy="8" r="5.2"/><g><rect x="6.6" y="1" width="2.8" height="14" rx=".6"/><rect x="6.6" y="1" width="2.8" height="14" rx=".6" transform="rotate(45 8 8)"/><rect x="6.6" y="1" width="2.8" height="14" rx=".6" transform="rotate(90 8 8)"/><rect x="6.6" y="1" width="2.8" height="14" rx=".6" transform="rotate(135 8 8)"/></g></g><circle cx="8" cy="8" r="3.6" fill="#cfcfcf"/><circle cx="8" cy="8" r="2" fill="#f0f0f0"/></svg>
<svg style="left:2519px;top:221px" width="30" height="30" viewBox="0 0 16 16"><g fill="#b4b4b4"><circle cx="8" cy="8" r="5.2"/><g><rect x="6.6" y="1" width="2.8" height="14" rx=".6"/><rect x="6.6" y="1" width="2.8" height="14" rx=".6" transform="rotate(45 8 8)"/><rect x="6.6" y="1" width="2.8" height="14" rx=".6" transform="rotate(90 8 8)"/><rect x="6.6" y="1" width="2.8" height="14" rx=".6" transform="rotate(135 8 8)"/></g></g><circle cx="8" cy="8" r="3.6" fill="#cfcfcf"/><circle cx="8" cy="8" r="2" fill="#f0f0f0"/></svg>
<svg style="left:2519px;top:262px" width="30" height="30" viewBox="0 0 16 16"><g fill="#b4b4b4"><circle cx="8" cy="8" r="5.2"/><g><rect x="6.6" y="1" width="2.8" height="14" rx=".6"/><rect x="6.6" y="1" width="2.8" height="14" rx=".6" transform="rotate(45 8 8)"/><rect x="6.6" y="1" width="2.8" height="14" rx=".6" transform="rotate(90 8 8)"/><rect x="6.6" y="1" width="2.8" height="14" rx=".6" transform="rotate(135 8 8)"/></g></g><circle cx="8" cy="8" r="3.6" fill="#cfcfcf"/><circle cx="8" cy="8" r="2" fill="#f0f0f0"/></svg>
<div class="btn" style="left:2152px;top:300px;width:178px;height:45px"></div>
<div class="btn" style="left:2335px;top:300px;width:210px;height:45px;background:#e6e6e6"></div>
<svg style="left:2158px;top:306px" width="26" height="26" viewBox="0 0 16 16"><path d="M2 5l5-3 6 2v7l-6 3-5-2z" fill="#e8e8e8" stroke="#b9bdc4" stroke-width=".8"/><path d="M2 5l5 2 6-3M7 7v7" fill="none" stroke="#c3c7cd" stroke-width=".8"/><ellipse cx="6.5" cy="2.6" rx="2" ry="1.2" fill="#f6f6f6" stroke="#c5c8ce" stroke-width=".6"/></svg><svg style="left:2162px;top:314px" width="26" height="22" viewBox="0 0 26 22"><path d="M2 8h11V2l11 9-11 9v-6H2z" fill="#5db345" stroke="#3f9230" stroke-width="1.2"/></svg>
<svg style="left:2339px;top:306px" width="26" height="26" viewBox="0 0 16 16"><path d="M2 5l5-3 6 2v7l-6 3-5-2z" fill="#e8e8e8" stroke="#b9bdc4" stroke-width=".8"/><path d="M2 5l5 2 6-3M7 7v7" fill="none" stroke="#c3c7cd" stroke-width=".8"/><ellipse cx="6.5" cy="2.6" rx="2" ry="1.2" fill="#f6f6f6" stroke="#c5c8ce" stroke-width=".6"/></svg><svg style="left:2343px;top:314px" width="26" height="22" viewBox="0 0 26 22"><path d="M2 8h11V2l11 9-11 9v-6H2z" fill="#5db345" stroke="#3f9230" stroke-width="1.2"/></svg>
<span class="t" style="left:2182.0px;top:307.0px;font-size:21px;letter-spacing:-1.35px;color:#2a2a2a;">Export STL...</span>
<span class="t" style="left:2364.0px;top:307.0px;font-size:21px;letter-spacing:-0.87px;color:#2a2a2a;">Export G-code...</span>
<div class="a" style="left:1966px;top:369px;width:580px;height:93px;border:1.5px solid #e0e0e0;box-sizing:border-box"></div>
<div class="a" style="left:1974px;top:355px;width:156px;height:28px;background:#f0f0f0"></div>
<span class="t" style="left:1979.0px;top:354.0px;font-size:21px;letter-spacing:-0.50px;color:#2a2a2a;">Support material</span>
<span class="t" style="left:1982.0px;top:395.0px;font-size:21px;letter-spacing:-0.78px;color:#2a2a2a;">Generate support</span>
<span class="t" style="left:1982.0px;top:420.0px;font-size:21px;letter-spacing:-0.50px;color:#2a2a2a;">material:</span>
<svg style="left:2504px;top:411px" width="24" height="24" viewBox="0 0 24 24"><rect x="1.5" y="1.5" width="21" height="21" fill="#fff" stroke="#333" stroke-width="2"/><path d="M5 12l5 5 9-11" fill="none" stroke="#333" stroke-width="2.2"/></svg>
<div class="a" style="left:1966px;top:1155px;width:581px;height:170px;border:1.5px solid #e0e0e0;box-sizing:border-box"></div>
<div class="a" style="left:1974px;top:1141px;width:44px;height:28px;background:#f0f0f0"></div>
<span class="t" style="left:1979.0px;top:1140.0px;font-size:21px;letter-spacing:-0.51px;color:#2a2a2a;">Info</span>
<span class="t" style="left:1972.0px;top:1178.0px;font-size:21px;letter-spacing:-0.93px;color:#2a2a2a;">Object:</span>
<div class="btn" style="left:2035px;top:1175px;width:504px;height:39px"></div>
<span class="t" style="left:2042.0px;top:1180.0px;font-size:21px;letter-spacing:-0.92px;color:#2a2a2a;">All_In_One_3D_printer_test_micro.stl</span>
<svg style="left:2514px;top:1190px" width="18" height="10" viewBox="0 0 18 10"><path d="M1.5 1.5L9 8.5 16.5 1.5" fill="none" stroke="#6a6a6a" stroke-width="2.4"/></svg>
<span class="t" style="left:1972.0px;top:1220.0px;font-size:21px;letter-spacing:-1.03px;color:#2a2a2a;">Copies:</span>
<span class="t" style="left:2066.0px;top:1220.0px;font-size:21px;letter-spacing:0.00px;color:#2a2a2a;">1</span>
<span class="t" style="left:1972.0px;top:1255.0px;font-size:21px;letter-spacing:-0.70px;color:#2a2a2a;">Volume:</span>
<span class="t" style="left:2066.0px;top:1255.0px;font-size:21px;letter-spacing:-1.70px;color:#2a2a2a;">10521.20</span>
<span class="t" style="left:1972.0px;top:1289.0px;font-size:21px;letter-spacing:-0.70px;color:#2a2a2a;">Materials:</span>
<span class="t" style="left:2066.0px;top:1289.0px;font-size:21px;letter-spacing:0.00px;color:#2a2a2a;">1</span>
<span class="t" style="left:2210.0px;top:1220.0px;font-size:21px;letter-spacing:-1.94px;color:#2a2a2a;">Size:</span>
<span class="t" style="left:2304.0px;top:1220.0px;font-size:21px;letter-spacing:-1.52px;color:#2a2a2a;">50.00 x 50.00 x 56.21</span>
<span class="t" style="left:2210.0px;top:1255.0px;font-size:21px;letter-spacing:-1.41px;color:#2a2a2a;">Facets:</span>
<span class="t" style="left:2304.0px;top:1255.0px;font-size:21px;letter-spacing:-1.21px;color:#2a2a2a;">19856 (1 shells)</span>
<span class="t" style="left:2210.0px;top:1289.0px;font-size:21px;letter-spacing:-0.13px;color:#2a2a2a;">Manifold:</span>
<span class="t" style="left:2304.0px;top:1289.0px;font-size:21px;letter-spacing:-2.09px;color:#2a2a2a;">Yes</span>
<div class="a" style="left:13px;top:1287px;width:79px;height:39px;background:#f4f4f4;border:2px solid #8d8d8d;border-top:none;border-radius:0 0 4px 4px;box-sizing:border-box;border-left-color:#cfcfcf;"></div><span class="t" style="left:22.0px;top:1295.0px;font-size:19.5px;letter-spacing:-0.96px;color:#2a2a2a;">3D</span>
<div class="a" style="left:94px;top:1287px;width:76px;height:35px;background:#f0f0f0;border:2px solid #8d8d8d;border-top:1px solid #d8d8d8;border-radius:0 0 4px 4px;box-sizing:border-box;"></div><span class="t" style="left:102.0px;top:1291.0px;font-size:19.5px;letter-spacing:-0.96px;color:#2a2a2a;">2D</span>
<div class="a" style="left:174px;top:1287px;width:84px;height:35px;background:#f0f0f0;border:2px solid #8d8d8d;border-top:1px solid #d8d8d8;border-radius:0 0 4px 4px;box-sizing:border-box;"></div><span class="t" style="left:181.0px;top:1291.0px;font-size:19.5px;letter-spacing:-0.05px;color:#2a2a2a;">Preview</span>
<div class="a" style="left:263px;top:1287px;width:76px;height:35px;background:#f0f0f0;border:2px solid #8d8d8d;border-top:1px solid #d8d8d8;border-radius:0 0 4px 4px;box-sizing:border-box;"></div><span class="t" style="left:270.0px;top:1291.0px;font-size:19.5px;letter-spacing:-0.59px;color:#2a2a2a;">Layers</span>
<div class="a" style="left:92px;top:1286px;width:1866px;height:3.5px;background:linear-gradient(#6a6a6a,#b0b0b0)"></div>
<div class="a" style="left:0;top:1333px;width:2560px;height:41px;background:#f0f0f0"></div>
<div class="a" style="left:0;top:1334px;width:2560px;height:2px;background:#dcdcdc"></div>
<div class="a" style="left:2020px;top:1338px;width:2px;height:32px;background:#e2e2e2"></div>
<div class="a" style="left:2286px;top:1338px;width:2px;height:32px;background:#e2e2e2"></div>
<div class="a" style="left:0;top:1373px;width:2560px;height:67px;background:#0d0d0d"></div>
<svg style="left:26px;top:1392px" width="28" height="29" viewBox="0 0 28 29"><path d="M0 4.2L11.5 2.6V13.6H0z M13.2 2.3L28 0V13.6H13.2z M0 15.2H11.5V26.2L0 24.6z M13.2 15.2H28V29L13.2 26.5z" fill="#fff"/></svg>
<div class="a" style="left:80px;top:1373px;width:573px;height:67px;background:#f2f2f2"></div>
<div class="a" style="left:96px;top:1390px;width:34px;height:34px;border:4.5px solid #111;border-radius:50%;box-sizing:border-box"></div>
<span class="t" style="left:147.0px;top:1392.0px;font-size:23px;letter-spacing:-0.02px;color:#4a4a4a;">Type here to search</span>
<svg style="left:608px;top:1390px" width="24" height="36" viewBox="0 0 24 36"><rect x="7" y="2" width="10" height="20" rx="5" fill="none" stroke="#222" stroke-width="2.4"/><path d="M3 15v3a9 9 0 0 0 18 0v-3M12 27v6" fill="none" stroke="#222" stroke-width="2.4"/></svg>
<svg style="left:673px;top:1390px" width="36" height="30" viewBox="0 0 36 30"><g fill="none" stroke="#fff" stroke-width="2.4"><rect x="5" y="7" width="18" height="16"/><path d="M1 1.5h26M1 28.5h26" stroke-dasharray="4 2.5"/><path d="M32 1v28"/></g><rect x="29.5" y="10" width="5" height="4" fill="#fff"/></svg>
<svg style="left:759px;top:1388px" width="38" height="34" viewBox="0 0 38 34"><path d="M1 4h12l3 3h21v24H1z" fill="#f6d371"/><path d="M1 10h36v21H1z" fill="#fbe49b"/><path d="M9 19h20v12H9z" fill="#3a9ae6"/><path d="M13 25h12v6H13z" fill="#fbe49b"/><rect x="3" y="12" width="32" height="3" fill="#f1c755"/></svg>
<div class="a" style="left:745px;top:1436px;width:68px;height:4px;background:#76b9ed"></div>
<svg style="left:841px;top:1384px" width="40" height="42" viewBox="0 0 40 42"><path d="M13 13V9a7 7 0 0 1 14 0v4" fill="none" stroke="#d9d9e6" stroke-width="2.4"/><path d="M2 12h36l-2 28H4z" fill="#fafafa"/><rect x="12" y="17" width="7" height="7" fill="#f25022"/><rect x="21" y="17" width="7" height="7" fill="#7fba00"/><rect x="12" y="26" width="7" height="7" fill="#00a4ef"/><rect x="21" y="26" width="7" height="7" fill="#ffb900"/></svg>
<svg style="left:923px;top:1386px" width="40" height="40" viewBox="0 0 40 40"><circle cx="20" cy="20" r="19.5" fill="#2ea1dc"/><path d="M7 19.5L31 10.5 27 30l-7-5-3.5 3.5-.7-6.3L26 14.5 13 21.8z" fill="#fff"/><path d="M15.8 22.2l.7 6.3L20 25z" fill="#c8daea"/></svg>
<div class="a" style="left:910px;top:1436px;width:69px;height:4px;background:#76b9ed"></div>
<svg style="left:1012px;top:1390px" width="30" height="32" viewBox="0 0 30 32"><path d="M0 0h30v20L18 32H0z" fill="#ffe81a"/><path d="M30 20L18 32V20z" fill="#1a1a1a"/><path d="M16 18h14v2H18v12h-2z" fill="#1a1a1a" opacity=".85"/></svg>
<div class="a" style="left:993px;top:1436px;width:69px;height:4px;background:#76b9ed"></div>
<svg style="left:1089px;top:1386px" width="40" height="40" viewBox="0 0 40 40"><defs><linearGradient id="gl" x1="0" y1="0" x2="1" y2="1"><stop offset="0" stop-color="#bfe4f2"/><stop offset=".5" stop-color="#6fb6d0"/><stop offset="1" stop-color="#d6edf5"/></linearGradient></defs><path d="M12 3l22 2 2 30-30 3z" fill="#e9e9e9"/><path d="M10 4l22 1-6 28-24-2z" fill="url(#gl)"/><path d="M2 31l24 2 2 4-24-1z" fill="#9fb3bb"/></svg>
<svg style="left:1171px;top:1386px" width="40" height="40" viewBox="0 0 40 40"><circle cx="20" cy="20" r="19.5" fill="#ea4335"/><path d="M20 20L3.1 10.2A19.5 19.5 0 0 0 19 39.5L28.4 24.9z" fill="#34a853"/><path d="M20 20h17.9A19.5 19.5 0 0 1 19 39.5L28.4 24.9z" fill="#fbbc05"/><path d="M20 20L3.1 10.2 11.6 25z" fill="#34a853"/><path d="M20 11h17.3A19.5 19.5 0 0 1 19 39.5l9.3-14.6A9 9 0 0 0 20 11z" fill="#fbbc05"/><circle cx="20" cy="20" r="9" fill="#fff"/><circle cx="20" cy="20" r="7.2" fill="#4285f4"/></svg>
<div class="a" style="left:1159px;top:1436px;width:68px;height:4px;background:#76b9ed"></div>
<svg style="left:1256px;top:1389px" width="36" height="35" viewBox="0 0 36 35"><rect width="36" height="35" fill="#fff"/><path d="M2 2h32v20l-6-9-5 7-3-4-6-9L2 24z" fill="#0d0d0d"/></svg>
<div class="a" style="left:1241px;top:1436px;width:69px;height:4px;background:#76b9ed"></div>
<div class="a" style="left:1316px;top:1373px;width:83px;height:67px;background:#3b3b3b"></div>
<svg style="left:1344px;top:1387px" width="26" height="37" viewBox="0 0 26 37">
<defs><linearGradient id="lgb" x1="0" y1="0" x2="1" y2="1"><stop offset="0" stop-color="#b8b84a"/><stop offset=".45" stop-color="#8c8c14"/><stop offset="1" stop-color="#5e5a08"/></linearGradient>
<clipPath id="lcb"><path d="M14 1C22 1 26 8 25 14C24.500 18 22.500 20 19.500 21.500C23 23 25 27.500 22.500 32C19.500 36 12 37 7 35C2 33 0 28 1 22.500C1.500 19 3.500 17 6.500 15.500C2.500 13.500 1 9 4 5C6 2 10 1 14 1Z"/></clipPath></defs>
<path d="M14 1C22 1 26 8 25 14C24.500 18 22.500 20 19.500 21.500C23 23 25 27.500 22.500 32C19.500 36 12 37 7 35C2 33 0 28 1 22.500C1.500 19 3.500 17 6.500 15.500C2.500 13.500 1 9 4 5C6 2 10 1 14 1Z" fill="url(#lgb)"/>
<g clip-path="url(#lcb)"><path d="M-2 36C4 26 9 22 13 19C17 16 22 10 26 0L30 4C24 14 20 19 15 22C10 25 6 30 2 40Z" fill="#d9d834"/><path d="M3 8C8 1 18 0 24 6" fill="none" stroke="#cfd08a" stroke-width="2" opacity=".8"/></g></svg>
<div class="a" style="left:1316px;top:1436px;width:83px;height:4px;background:#8fd0ff"></div>
<div class="a" style="left:1835px;top:1390px;width:80px;height:32px;border:2.5px solid #fff;box-sizing:border-box;background:linear-gradient(90deg,#22a552 0,#22a552 60%,#0d0d0d 60%)"></div>
<div class="a" style="left:1915px;top:1398px;width:5px;height:16px;background:#fff"></div>
<span class="t" style="left:1853.0px;top:1391.0px;font-size:23px;letter-spacing:-0.68px;color:#fff;-webkit-text-stroke:.15px #fff;text-shadow:none">59%</span>
<svg style="left:1983px;top:1392px" width="28" height="28" viewBox="0 0 28 28"><circle cx="18" cy="6" r="4.2" fill="none" stroke="#fff" stroke-width="2"/><circle cx="8" cy="13" r="4.2" fill="none" stroke="#fff" stroke-width="2"/><path d="M11 10.5l4-2.5M1.5 27c0-6 2.5-9 6.5-9s6.500 3 6.500 9M22 11c3 1 4.500 4 4.500 8" fill="none" stroke="#fff" stroke-width="2"/></svg>
<svg style="left:2044px;top:1398px" width="24" height="14" viewBox="0 0 24 14"><path d="M1.500 12.500L12 2l10.500 10.500" fill="none" stroke="#fff" stroke-width="2" stroke-width="2.4"/></svg>
<svg style="left:2081px;top:1396px" width="31" height="20" viewBox="0 0 31 20"><path d="M7 19a6 6 0 0 1-1-11.900A9 9 0 0 1 22.500 6 6.500 6.500 0 0 1 25 19z" fill="#fff"/><path d="M10 19l9-9" stroke="#0d0d0d" stroke-width="1.500"/></svg>
<svg style="left:2122px;top:1397px" width="30" height="20" viewBox="0 0 30 20"><rect x="1.500" y="2.500" width="23" height="15" fill="none" stroke="#fff" stroke-width="2"/><rect x="4" y="5" width="11" height="10" fill="#fff"/><rect x="25.500" y="6.500" width="3" height="7" fill="#fff"/></svg>
<svg style="left:2164px;top:1394px" width="28" height="26" viewBox="0 0 28 26"><g fill="none" stroke-width="2.400"><path d="M3 24A21 21 0 0 1 24 3" stroke="#6a6a6a"/><path d="M9 24A15 15 0 0 1 24 9" stroke="#8a8a8a"/><path d="M15.500 24A8.500 8.500 0 0 1 24 15.500" stroke="#d0d0d0"/></g><circle cx="22" cy="22" r="2.600" fill="#fff"/></svg>
<svg style="left:2200px;top:1394px" width="30" height="26" viewBox="0 0 30 26"><path d="M2 9h5l6-6v20l-6-6H2z" fill="none" stroke="#fff" stroke-width="2"/><path d="M18 8l9 9M27 8l-9 9" fill="none" stroke="#fff" stroke-width="2"/></svg>
<svg style="left:2247px;top:1390px" width="32" height="32" viewBox="0 0 32 32"><path d="M20 3l4 3-13 20-5 2 1-5z" fill="none" stroke="#fff" stroke-width="2"/><path d="M9 21c-5-1-8 3-6 6s6 2 7-1M21 12c4 0 7 3 8 6" fill="none" stroke="#fff" stroke-width="2"/></svg>
<span class="t" style="left:2300.0px;top:1392.0px;font-size:21px;letter-spacing:-2.17px;color:#fff;-webkit-text-stroke:.15px #fff;text-shadow:none">ENG</span>
<span class="t" style="left:2388.0px;top:1376.0px;font-size:21px;letter-spacing:-1.91px;color:#fff;-webkit-text-stroke:.15px #fff;text-shadow:none">16:51</span>
<span class="t" style="left:2360.0px;top:1406.0px;font-size:21px;letter-spacing:-0.64px;color:#fff;-webkit-text-stroke:.15px #fff;text-shadow:none">24-02-2019</span>
<svg style="left:2491px;top:1388px" width="42" height="42" viewBox="0 0 42 42"><path d="M2 2h28v22H10l-5 6v-6H2z" fill="#fff"/><path d="M7 8h18M7 13h18M7 18h12" stroke="#0d0d0d" stroke-width="1.800"/><circle cx="30" cy="29" r="10.500" fill="#2a2a2a" stroke="#8a8a8a" stroke-width="1.500"/></svg>
<span class="t" style="left:2516.0px;top:1402.0px;font-size:19px;letter-spacing:0.00px;color:#fff;-webkit-text-stroke:.15px #fff;text-shadow:none">1</span>
<div class="a" style="left:2554px;top:1373px;width:2px;height:67px;background:#555"></div>
</body></html>
